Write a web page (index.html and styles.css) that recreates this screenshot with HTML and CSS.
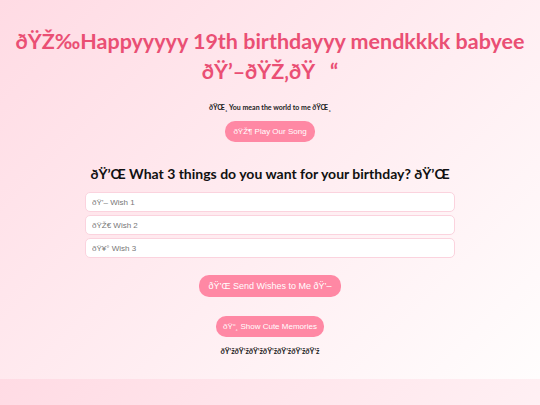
FILE: index.html
```html
<!DOCTYPE html>
<html lang="en">

<head>
    <meta charset="UTF-8">
    <title>Happy Birthday</title>
    <link rel="stylesheet" href="styles.css">
</head>

<body>
    <div class="page">
        <!-- 标题 -->
        <h1 class="title">ðŸŽ‰Happyyyyy 19th birthdayyy mendkkkk babyee ðŸ’–ðŸŽ‚ðŸ&nbsp;&nbsp;&nbsp;“</h1>
        <p class="love">ðŸŒ¸ You mean the world to me ðŸŒ¸</p>
        <button class="btn btn-song">ðŸŽ¶ Play Our Song</button>

        <!-- 愿望 -->
        <h2 class="ask">ðŸ’Œ What 3 things do you want for your birthday? ðŸ’Œ</h2>
        <div class="wishes">
            <input type="text" placeholder="ðŸ’– Wish 1">
            <input type="text" placeholder="ðŸŽ€ Wish 2">
            <input type="text" placeholder="ðŸ¥° Wish 3">
        </div>
        <button class="btn btn-send">ðŸ’Œ Send Wishes to Me ðŸ’–</button>

        <button class="btn btn-mem">ðŸ“¸ Show Cute Memories</button>
        <p class="hearts">ðŸ’žðŸ’žðŸ’žðŸ’žðŸ’žðŸ’žðŸ’ž</p>
    </div>
</body>

</html>
```

FILE: styles.css
```css
* {
    margin: 0;
    padding: 0;
    box-sizing: border-box;
}

body {
    font-family: "Comic Sans MS", Lato, sans-serif;
    background: linear-gradient(135deg, #ffdbe4, #fffdfd);
    text-align: center;
}

.page {
    display: flex;
    flex-direction: column;
    align-items: center;
    padding: 26px 4px 23px;
}

.title {
    font-size: 21.5px;
    line-height: 30px;
    color: #ea4f74;
    font-weight: bold;
}

.love {
    font-size: 7px;
    margin-top: 17px;
    color: #222;
    font-weight: bold;
}

.btn {
    font-family: "Liberation Sans", Arial, sans-serif;
    background: #ff88a4;
    color: #fff;
    border: none;
    border-radius: 10px;
    cursor: pointer;
}

.btn-song {
    font-size: 8px;
    width: 90px;
    height: 21px;
    margin-top: 10px;
}

/* 问题 */
.ask {
    font-size: 14px;
    margin-top: 23px;
    color: #111;
}

.wishes {
    display: flex;
    flex-direction: column;
    gap: 3px;
    width: 370px;
    margin-top: 10px;
}

.wishes input {
    height: 20px;
    border: 1px solid #fbd3de;
    border-radius: 5px;
    padding: 0 6px;
    font-family: "Liberation Sans", Arial, sans-serif;
    font-size: 8px;
    background: #fff;
}

.wishes input::placeholder {
    color: #777;
}

.btn-send {
    font-size: 9px;
    width: 142px;
    height: 22px;
    margin-top: 17px;
}

.btn-mem {
    font-size: 8px;
    width: 108px;
    height: 21px;
    margin-top: 19px;
}

.hearts {
    font-size: 7.5px;
    margin-top: 10px;
    color: #222;
    font-weight: bold;
}
```
